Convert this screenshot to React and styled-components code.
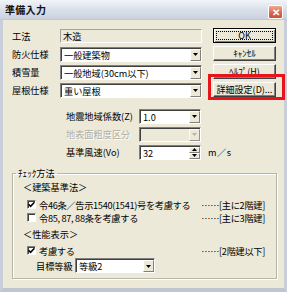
import styled, { createGlobalStyle } from "styled-components";

const Global = createGlobalStyle`
  html, body {
    margin: 0;
    padding: 0;
    width: 287px;
    height: 292px;
    overflow: hidden;
    background: #ece9d8;
  }
  * { box-sizing: border-box; }
`

const FONT = `"Noto Sans CJK JP", "Noto Sans", sans-serif`

export default function App() {
  return (
    <>
      <Global />
      <Window>
        <TitleBar>
          <Title>準備入力</Title>
          <CloseBtn>✕</CloseBtn>
        </TitleBar>

        <Body>
          <Top>
            <Form>
              <Row>
                <Label>工法</Label>
                <Static>木造</Static>
              </Row>
              <Row>
                <Label>防火仕様</Label>
                <Combo value="一般建築物" width={142} />
              </Row>
              <Row>
                <Label>積雪量</Label>
                <Combo value="一般地域(30cm以下)" width={142} />
              </Row>
              <Row>
                <Label>屋根仕様</Label>
                <Combo value="重い屋根" width={142} />
              </Row>
            </Form>

            <Buttons>
              <Button $default>
                <Focus>OK</Focus>
              </Button>
              <Button>ｷｬﾝｾﾙ</Button>
              <Button>ﾍﾙﾌﾟ(H)</Button>
              <Marked>
                <Button>詳細設定(D)...</Button>
                <Highlight />
              </Marked>
            </Buttons>
          </Top>

          <Seismic>
            <Row>
              <SubLabel>地震地域係数(Z)</SubLabel>
              <Combo value="1.0" width={62} />
            </Row>
            <Row>
              <SubLabel $disabled>地表面粗度区分</SubLabel>
              <Combo value="" width={62} disabled />
            </Row>
            <Row>
              <SubLabel>基準風速(Vo)</SubLabel>
              <Spin value="32" />
              <Unit>m／s</Unit>
            </Row>
          </Seismic>

          <Group>
            <Legend>ﾁｪｯｸ方法</Legend>
            <GroupInner>
              <Heading>＜建築基準法＞</Heading>
              <CheckRow $mt={4}>
                <Check checked label="令46条／告示1540(1541)号を考慮する" />
                <Note>……[主に2階建]</Note>
              </CheckRow>
              <CheckRow>
                <Check label="令85, 87, 88条を考慮する" />
                <Note>……[主に3階建]</Note>
              </CheckRow>
              <Heading $mt={4}>＜性能表示＞</Heading>
              <CheckRow $mt={3}>
                <Check checked label="考慮する" />
                <Note>……[2階建以下]</Note>
              </CheckRow>
              <TargetRow>
                <TargetLabel>目標等級</TargetLabel>
                <Combo value="等級2" width={80} />
              </TargetRow>
            </GroupInner>
          </Group>
        </Body>
      </Window>
    </>
  )
}

function Combo({ value, width, disabled }) {
  return (
    <Field $width={width} $disabled={disabled}>
      <FieldText>{value}</FieldText>
      <ArrowBtn $disabled={disabled}>
        <svg width="5" height="3" viewBox="0 0 5 3">
          <path d="M0 0H5L2.5 3Z" fill={disabled ? "#a8a8a8" : "#000"} />
        </svg>
      </ArrowBtn>
    </Field>
  )
}

function Spin({ value }) {
  return (
    <Field $width={62}>
      <FieldText>{value}</FieldText>
      <SpinBtns>
        <SpinHalf>
          <svg width="5" height="3" viewBox="0 0 5 3">
            <path d="M0 3H5L2.5 0Z" fill="#000" />
          </svg>
        </SpinHalf>
        <SpinHalf>
          <svg width="5" height="3" viewBox="0 0 5 3">
            <path d="M0 0H5L2.5 3Z" fill="#000" />
          </svg>
        </SpinHalf>
      </SpinBtns>
    </Field>
  )
}

function Check({ checked, label }) {
  return (
    <CheckWrap>
      <Box>
        {checked && (
          <svg width="7" height="7" viewBox="0 0 7 7">
            <path d="M0.5 3.2L2.6 5.3L6.5 1.2" stroke="#000" strokeWidth="1.6" fill="none" />
          </svg>
        )}
      </Box>
      <CheckText>{label}</CheckText>
    </CheckWrap>
  )
}

const Window = styled.div`
    width: 287px;
    height: 292px;
    display: flex;
    flex-direction: column;
    font-family: ${FONT};
    font-size: 9.2px;
    color: #000;
`

const TitleBar = styled.div`
    height: 20px;
    flex: none;
    display: flex;
    align-items: center;
    justify-content: space-between;
    padding: 0 4px 0 5px;
    background: linear-gradient(#f2f4f8, #dce2ec 45%, #cbd2df);
    border-bottom: 1px solid #c0c7d4;
`

const Title = styled.div`
    font-size: 10px;
    font-weight: bold;
    color: #111;
    letter-spacing: 0.3px;
`

const CloseBtn = styled.div`
    width: 15px;
    height: 14px;
    margin-top: 4px;
    display: flex;
    align-items: center;
    justify-content: center;
    border: 1px solid #fff;
    border-radius: 2px;
    background: linear-gradient(#f0a894, #d8644a 60%, #c9543c);
    color: #fff;
    font-size: 10px;
    font-weight: bold;
    line-height: 1;
`

const Body = styled.div`
    flex: 1;
    position: relative;
    border-left: 3px solid #c9cfda;
    border-right: 3px solid #c9cfda;
    border-bottom: 4px solid #bfc5d1;
    padding: 7px 0 0 9px;
    background: #ece9d8;
`

const Top = styled.div`
    display: flex;
`

const Form = styled.div`
    width: 190px;
    display: flex;
    flex-direction: column;
`

const Row = styled.div`
    height: 18px;
    display: flex;
    align-items: center;
`

const Label = styled.div`
    width: 48px;
    white-space: nowrap;
`

const Static = styled.div`
    width: 142px;
    height: 14px;
    display: flex;
    align-items: center;
    padding-left: 2px;
    border-top: 1px solid #a5a297;
    border-left: 1px solid #a5a297;
    border-bottom: 1px solid #fff;
    border-right: 1px solid #fff;
`

const Field = styled.div`
    width: ${(p) => p.$width}px;
    height: 15px;
    display: flex;
    align-items: stretch;
    background: ${(p) => (p.$disabled ? "#ece9d8" : "#fff")};
    border: 1px solid;
    border-color: #808080 #fff #fff #808080;
    box-shadow: inset 1px 1px 0 #404040;
    padding: 1px 0 0 1px;
`

const FieldText = styled.div`
    flex: 1;
    display: flex;
    align-items: center;
    padding-left: 2px;
    white-space: nowrap;
    overflow: hidden;
`

const ArrowBtn = styled.div`
    width: 11px;
    display: flex;
    align-items: center;
    justify-content: center;
    background: #ece9d8;
    border: 1px solid;
    border-color: #fff #808080 #808080 #fff;
    opacity: ${(p) => (p.$disabled ? 0.8 : 1)};
`

const SpinBtns = styled.div`
    width: 11px;
    display: flex;
    flex-direction: column;
`

const SpinHalf = styled.div`
    flex: 1;
    display: flex;
    align-items: center;
    justify-content: center;
    background: #ece9d8;
    border: 1px solid;
    border-color: #fff #808080 #808080 #fff;
`

const Buttons = styled.div`
    margin-left: 11px;
    margin-top: 1px;
    width: 63px;
    display: flex;
    flex-direction: column;
    gap: 3px;
`

const Button = styled.div`
    height: 15px;
    display: flex;
    align-items: center;
    justify-content: center;
    white-space: nowrap;
    background: #ece9d8;
    border: 1px solid;
    border-color: ${(p) => (p.$default ? "#000" : "#fff #404040 #404040 #fff")};
    box-shadow: ${(p) =>
      p.$default
        ? "inset 1px 1px 0 #fff, inset -1px -1px 0 #808080"
        : "inset -1px -1px 0 #808080"};
    font-size: 9px;
    padding: ${(p) => (p.$default ? "2px" : "0")};
`

const Focus = styled.div`
    width: 100%;
    height: 100%;
    display: flex;
    align-items: center;
    justify-content: center;
    border: 1px dotted #000;
`

const Marked = styled.div`
    position: relative;
`

const Highlight = styled.div`
    position: absolute;
    left: -5px;
    right: -9px;
    top: -8px;
    bottom: -3px;
    border: 3px solid #e8141c;
    pointer-events: none;
`

const Seismic = styled.div`
    margin-top: 8px;
    margin-left: 54px;
    display: flex;
    flex-direction: column;
`

const SubLabel = styled.div`
    width: 73px;
    white-space: nowrap;
    color: ${(p) => (p.$disabled ? "#b0ad9f" : "#000")};
    text-shadow: ${(p) => (p.$disabled ? "1px 1px 0 #fff" : "none")};
`

const Unit = styled.div`
    margin-left: 7px;
    letter-spacing: 0.5px;
`

const Group = styled.fieldset`
    margin: 7px 0 0 0;
    padding: 0;
    width: 265px;
    min-inline-size: 0;
    border: 1px solid #b8b5a8;
    box-shadow: 1px 1px 0 #fff, inset 1px 1px 0 #fff;
`

const Legend = styled.legend`
    margin-left: 3px;
    padding: 0 2px;
    line-height: 11px;
    font-size: 9.2px;
`

const GroupInner = styled.div`
    display: flex;
    flex-direction: column;
    padding: 2px 11px 5px 10px;
`

const Heading = styled.div`
    height: 13px;
    line-height: 13px;
    margin-top: ${(p) => p.$mt || 0}px;
    white-space: nowrap;
`

const CheckRow = styled.div`
    height: 13px;
    margin-top: ${(p) => p.$mt || 0}px;
    padding-left: 4px;
    display: flex;
    align-items: center;
    justify-content: space-between;
    white-space: nowrap;
`

const CheckWrap = styled.div`
    display: flex;
    align-items: center;
    gap: 3px;
`

const CheckText = styled.span`
    letter-spacing: -0.3px;
`

const Box = styled.div`
    width: 9px;
    height: 9px;
    display: flex;
    align-items: center;
    justify-content: center;
    background: #fff;
    border: 1px solid;
    border-color: #808080 #fff #fff #808080;
    box-shadow: inset 1px 1px 0 #404040;
`

const Note = styled.div`
    letter-spacing: -0.3px;
`

const TargetRow = styled.div`
    height: 15px;
    margin-top: 1px;
    padding-left: 13px;
    display: flex;
    align-items: center;
`

const TargetLabel = styled.div`
    width: 39px;
    white-space: nowrap;
`
